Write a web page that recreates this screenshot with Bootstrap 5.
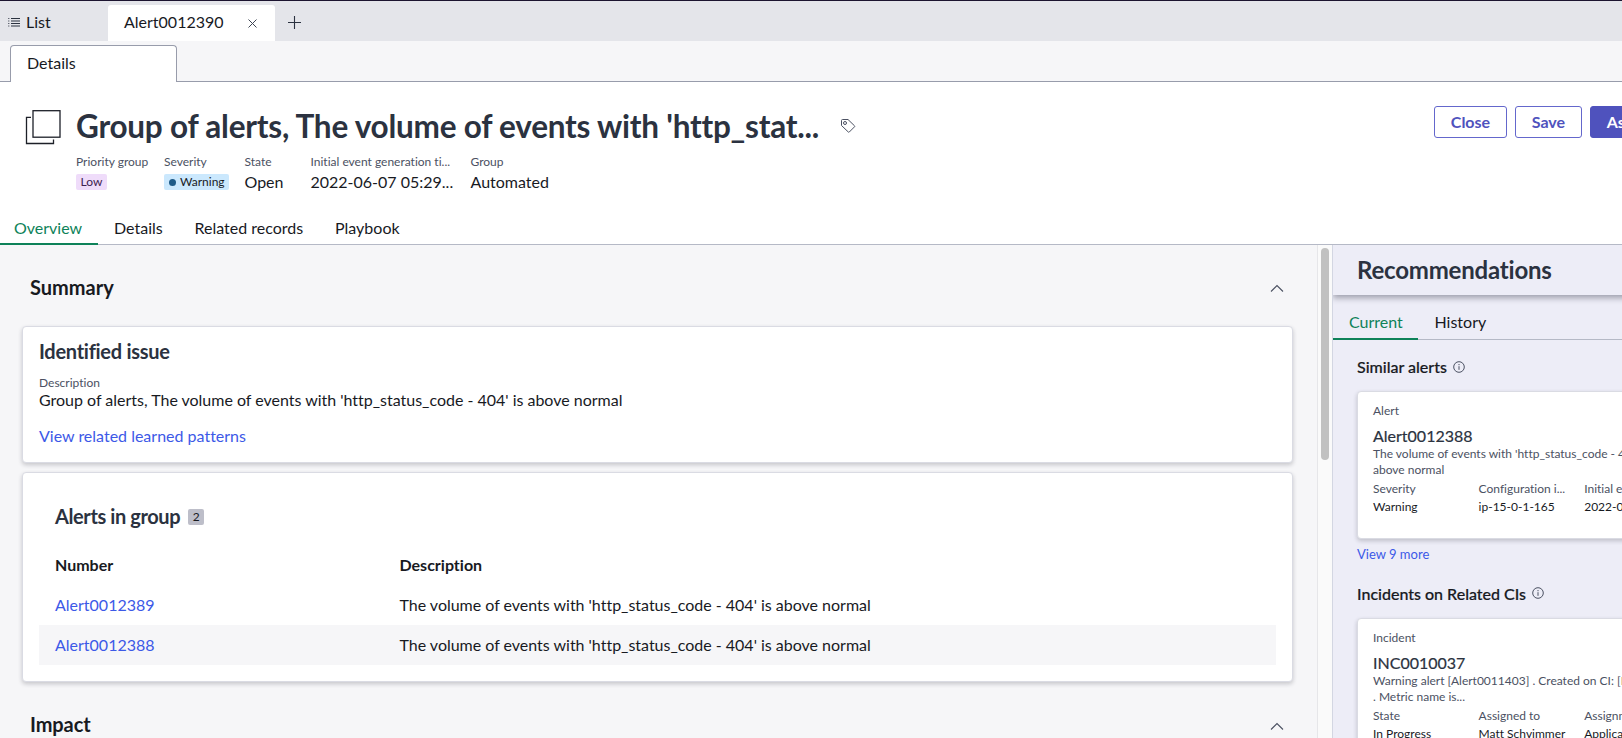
<!DOCTYPE html>
<html lang="en">
<head>
<meta charset="utf-8">
<meta name="viewport" content="width=device-width, initial-scale=1">
<title>Alert0012390</title>
<link href="https://cdn.jsdelivr.net/npm/bootstrap@5.3.0/dist/css/bootstrap.min.css" rel="stylesheet">
<style>
  body { font-family: Lato, "Liberation Sans", sans-serif; font-variant-ligatures: none; font-size: 16px; line-height: 20px; color: #181a1f; width: 100%; height: 738px; overflow: hidden; background: #fff; }
  a { color: #3c59e7; text-decoration: none; }
  svg { display: block; flex: none; }
  .t { white-space: nowrap; }
  .top-tabs { height: 41px; background: #e4e5ea; border-top: 1px solid #1c1430; }
  .top-list { width: 108px; padding: 11px 0 0 8px; gap: 6px; }
  .top-active { width: 167px; height: 36px; margin-top: 4px; padding: 7px 16px 0; background: #fff; border-radius: 3px 3px 0 0; }
  .sub-tabs { height: 41px; background: #f6f6f8; border-bottom: 1px solid #989cab; padding: 4px 0 0 10px; }
  .sub-tab { width: 167px; height: 37px; border: 1px solid #989cab; border-bottom: 0; border-radius: 4px 4px 0 0; background: #fff; padding: 7px 16px; }
  .record-head { height: 163px; border-bottom: 1px solid #b5b9c6; }
  .head-font { color: #2b3240; font-weight: 700; margin: 0; white-space: nowrap; }
  .record-title { font-size: 31.5px; line-height: 40px; width: 745px; overflow: hidden; letter-spacing: -.23px; }
  .lbl { font-size: 12px; line-height: 16px; color: #4b5162; white-space: nowrap; }
  .val { height: 24px; line-height: 23px; white-space: nowrap; }
  .pill { display: inline-flex; align-items: center; height: 16px; font-size: 12px; line-height: 16px; border-radius: 2px; padding: 0 4px; }
  .pill-low { background: #efdcfa; color: #3d2150; padding: 0 4.5px; }
  .pill-warn { background: #cbe8fd; padding: 0 4px 0 5px; gap: 4px; }
  .dot { width: 7px; height: 7px; border-radius: 50%; background: #1d5a87; }
  .act { height: 32px; line-height: 20px; font-size: 16px; font-weight: 700; padding: 5px 15.8px; border: 1px solid #6467cc; border-radius: 3px; color: #4f52bd; background: #fff; white-space: nowrap; }
  .act-main { background: #4f52bd; border-color: #4f52bd; color: #fff; }
  .line-tab { height: 29px; white-space: nowrap; }
  .line-tab.active { color: #0e8259; border-bottom: 2px solid #0e8259; }
  .left-pane { width: 1317px; background: #f6f6f8; padding: 0 24.5px 0 22px; overflow: hidden; }
  .track { width: 16px; background: #fafafa; border-left: 1px solid #e6e6e9; border-right: 1px solid #d3d6e2; padding: 3px 0 0 3px; }
  .thumb { width: 8px; height: 212px; border-radius: 4px; background: #c1c1c1; }
  .panel-card { background: #fff; border: 1px solid #dadbe3; border-radius: 4px; box-shadow: 0 2px 4px rgba(30,32,45,.22); }
  .sec { color: #181a1f; font-size: 20px; line-height: 24px; }
  .count { width: 16px; height: 16px; border-radius: 2px; background: #bdbec9; font-size: 12px; line-height: 16px; text-align: center; }
  .grid-row { height: 40px; padding: 10px 16px; }
  .grid-row > :first-child { width: 344.5px; }
  .right-pane { width: 289px; background: #ededf7; overflow: hidden; }
  .rec-head { height: 50px; padding: 12px 0 0 24px; box-shadow: 0 3px 6px rgba(40,42,60,.4); margin-right: -10px; }
  .rec-tabs { height: 45px; padding-top: 17px; border-bottom: 1px solid #b5b9c6; }
  .rec-tabs .line-tab { height: 28px; }
  .rec-card { width: 420px; margin-left: 24px; padding: 11px 15px 0; }
  .desc { font-size: 12px; line-height: 16px; color: #4b5162; white-space: nowrap; }
  .kv { width: 105.6px; flex: none; }
  .kv .v { font-size: 12px; line-height: 16px; white-space: nowrap; margin-top: 2px; }
  .rec-title { font-weight: 500; margin: 0; font-size: 16px; line-height: 20px; white-space: nowrap; -webkit-text-stroke: .2px #181a1f; }
  .rec-name { color: #2b3240; margin-top: 7px; white-space: nowrap; -webkit-text-stroke: .2px #2b3240; }
</style>
</head>
<body>
<div class="top-tabs d-flex">
  <div class="top-list d-flex">
    <svg style="margin-top:5px" width="12" height="12" viewBox="0 0 12 12" stroke="#2b3240" stroke-width="1"><path d="M3 1.500h9M3 4h9M3 6.500h9M3 9h9" /><path d="M.3 1.500h1M.3 4h1M.3 6.500h1M.3 9h1"/></svg>
    <span class="t">List</span>
  </div>
  <div class="top-active d-flex justify-content-between">
    <span class="t">Alert0012390</span>
    <svg style="margin:7px 2px 0 0" width="9" height="9" viewBox="0 0 9 9" stroke="#3f4654" stroke-width="1"><path d="M.5.5l8 8M8.500.5l-8 8"/></svg>
  </div>
  <svg style="margin:15px 0 0 13px" width="13" height="13" viewBox="0 0 13 13" stroke="#2b3240" stroke-width="1.100"><path d="M6.500 0v13M0 6.500h13"/></svg>
</div>
<div class="sub-tabs"><div class="sub-tab">Details</div></div>

<header class="record-head">
  <div class="d-flex" style="height:136px">
    <svg style="margin:27px 0 0 25px" width="37" height="37" viewBox="0 0 37 37" fill="none" stroke="#1d2028" stroke-width="1.300"><rect x="8" y="1.700" width="27" height="26.500"/><path d="M6 8.300H1.500V34.500H28.500V30.500"/></svg>
    <div style="margin:24px 0 0 14px">
      <div class="d-flex align-items-center">
        <h1 class="head-font record-title">Group of alerts, The volume of events with 'http_stat...</h1>
        <svg style="margin-left:19px" width="16" height="16" viewBox="0 0 16 16" fill="none" stroke="#4b5162" stroke-width="1"><path d="M1.500 2.500q0-1 1-1H8l6.500 6.300q.5.500 0 1L9.300 14q-.5.500-1 0L1.500 7.500z"/><circle cx="5" cy="5" r="1.500"/></svg>
      </div>
      <div class="d-flex mt-2">
        <div style="width:88px"><div class="lbl">Priority group</div><div class="val d-flex align-items-center"><span class="pill pill-low">Low</span></div></div>
        <div style="width:80.5px"><div class="lbl">Severity</div><div class="val d-flex align-items-center"><span class="pill pill-warn"><span class="dot"></span>Warning</span></div></div>
        <div style="width:66px"><div class="lbl">State</div><div class="val">Open</div></div>
        <div style="width:160px"><div class="lbl">Initial event generation ti...</div><div class="val">2022-06-07 05:29...</div></div>
        <div><div class="lbl">Group</div><div class="val">Automated</div></div>
      </div>
    </div>
    <div class="d-flex gap-2 overflow-hidden ms-auto" style="margin-top:24px;flex:none;width:188px">
      <button class="act">Close</button><button class="act">Save</button><button class="act act-main">Assign to me</button>
    </div>
  </div>
  <nav class="d-flex">
    <div class="line-tab active" style="padding:0 16px 0 14px;height:27px;width:98px">Overview</div>
    <div class="line-tab" style="padding-left:16px;width:81px">Details</div>
    <div class="line-tab" style="padding-left:15.5px;width:140px">Related records</div>
    <div class="line-tab" style="padding-left:16px">Playbook</div>
  </nav>
</header>

<main class="d-flex" style="height:493px">
  <section class="left-pane">
    <div class="d-flex justify-content-between" style="height:81px;padding:30px 8.5px 0 8px">
      <h2 class="head-font sec">Summary</h2>
      <svg style="margin-top:9px" width="14" height="9" viewBox="0 0 14 9" fill="none" stroke="#4b5162" stroke-width="1.100"><path d="M1 7.500L7 1.500L13 7.500"/></svg>
    </div>
    <div class="panel-card" style="height:137px;padding:12px 15.5px 0 16px">
      <h3 class="head-font sec" style="color:#2b3240;letter-spacing:-.28px">Identified issue</h3>
      <div class="lbl" style="margin-top:12px">Description</div>
      <div class="t" style="margin-top:-1px;letter-spacing:-.01px">Group of alerts, The volume of events with 'http_status_code - 404' is above normal</div>
      <a class="t d-block" style="margin-top:16px" href="#">View related learned patterns</a>
    </div>
    <div class="panel-card" style="height:210px;margin-top:9px;padding:31px 15.5px 0 16px">
      <div class="d-flex" style="padding-left:16px;gap:8px">
        <h3 class="head-font sec" style="color:#2b3240;letter-spacing:-.4px">Alerts in group</h3>
        <span class="count" style="margin-top:5px">2</span>
      </div>
      <div class="grid-row d-flex fw-bold" style="margin-top:17px"><div>Number</div><div>Description</div></div>
      <div class="grid-row d-flex"><a href="#">Alert0012389</a><div style="letter-spacing:-.01px">The volume of events with 'http_status_code - 404' is above normal</div></div>
      <div class="grid-row d-flex" style="background:#f6f6f8"><a href="#">Alert0012388</a><div style="letter-spacing:-.01px">The volume of events with 'http_status_code - 404' is above normal</div></div>
    </div>
    <div class="d-flex justify-content-between" style="padding:30px 8.5px 0 8px">
      <h2 class="head-font sec" style="letter-spacing:-.1px">Impact</h2>
      <svg style="margin-top:10px" width="14" height="9" viewBox="0 0 14 9" fill="none" stroke="#4b5162" stroke-width="1.100"><path d="M1 7.500L7 1.500L13 7.500"/></svg>
    </div>
  </section>
  <div class="track"><div class="thumb"></div></div>
  <aside class="right-pane">
    <div class="rec-head"><h2 class="head-font" style="font-size:24px;line-height:26px;letter-spacing:-.2px">Recommendations</h2></div>
    <div class="rec-tabs d-flex">
      <div class="line-tab active" style="padding-left:16px;width:85px">Current</div>
      <div class="line-tab" style="padding-left:16.5px">History</div>
    </div>
    <div class="d-flex" style="padding:17px 0 0 24px;gap:6px">
      <h3 class="rec-title">Similar alerts</h3>
      <svg style="margin-top:4px" width="12" height="12" viewBox="0 0 12 12" fill="none" stroke="#4b5162"><circle cx="6" cy="6" r="5.300"/><path d="M6 5.200v3.600M6 3v1.200"/></svg>
    </div>
    <div class="panel-card rec-card" style="height:148px;margin-top:14px">
      <div class="lbl">Alert</div>
      <div class="rec-name">Alert0012388</div>
      <div class="desc">The volume of events with 'http_status_code - 404' is<br>above normal</div>
      <div class="d-flex" style="margin-top:3px">
        <div class="kv"><div class="lbl">Severity</div><div class="v">Warning</div></div>
        <div class="kv"><div class="lbl">Configuration i...</div><div class="v">ip-15-0-1-165</div></div>
        <div class="kv"><div class="lbl">Initial event...</div><div class="v">2022-06-07...</div></div>
      </div>
    </div>
    <a class="t d-block" style="font-size:13px;line-height:20px;margin:5px 0 0 24px" href="#">View 9 more</a>
    <div class="d-flex" style="padding:20px 0 0 24px;gap:6px">
      <h3 class="rec-title">Incidents on Related CIs</h3>
      <svg style="margin-top:3px" width="12" height="12" viewBox="0 0 12 12" fill="none" stroke="#4b5162"><circle cx="6" cy="6" r="5.300"/><path d="M6 5.200v3.600M6 3v1.200"/></svg>
    </div>
    <div class="panel-card rec-card" style="height:148px;margin-top:14px">
      <div class="lbl">Incident</div>
      <div class="rec-name">INC0010037</div>
      <div class="desc">Warning alert [Alert0011403] . Created on CI: [Re<br>. Metric name is...</div>
      <div class="d-flex" style="margin-top:3px">
        <div class="kv"><div class="lbl">State</div><div class="v">In Progress</div></div>
        <div class="kv"><div class="lbl">Assigned to</div><div class="v">Matt Schvimmer</div></div>
        <div class="kv"><div class="lbl">Assignment...</div><div class="v">Application...</div></div>
      </div>
    </div>
  </aside>
</main>
<script src="https://cdn.jsdelivr.net/npm/bootstrap@5.3.0/dist/js/bootstrap.bundle.min.js"></script>
</body>
</html>
